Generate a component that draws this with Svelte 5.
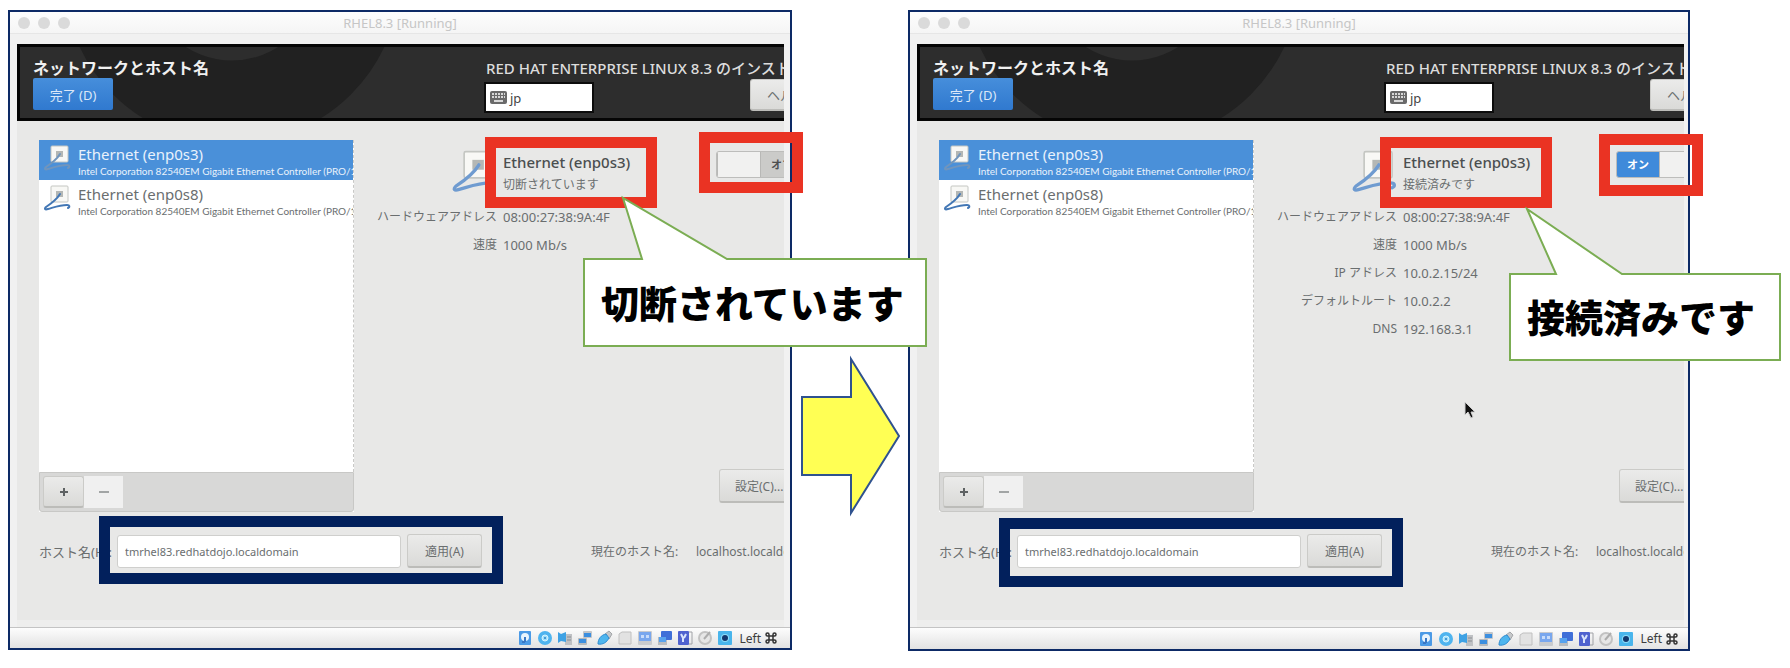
<script>
  const nic = 'Intel Corporation 82540EM Gigabit Ethernet Controller (PRO/1000 MT)';
  const devices = [
    { name: 'Ethernet (enp0s3)', info: nic },
    { name: 'Ethernet (enp0s8)', info: nic }
  ];
  const base = [
    ['ハードウェアアドレス', '08:00:27:38:9A:4F'],
    ['速度', '1000 Mb/s']
  ];
  const panes = [
    {
      id: 'before',
      on: false,
      status: '切断されています',
      rows: base,
      frames: [
        { kind: 'red', x: 477, y: 127, w: 172, h: 71 },
        { kind: 'red', x: 691, y: 122, w: 104, h: 61 },
        { kind: 'navy', x: 91, y: 506, w: 404, h: 68 }
      ],
      callout: { x: 575, y: 185, w: 344, h: 152, body: 61, points: '1,64 59,64 40,3 144,64 343,64 343,151 1,151' }
    },
    {
      id: 'after',
      on: true,
      status: '接続済みです',
      rows: [...base, ['IP アドレス', '10.0.2.15/24'], ['デフォルトルート', '10.0.2.2'], ['DNS', '192.168.3.1']],
      frames: [
        { kind: 'red', x: 472, y: 127, w: 172, h: 71 },
        { kind: 'red', x: 691, y: 124, w: 104, h: 62 },
        { kind: 'navy', x: 91, y: 508, w: 404, h: 69 }
      ],
      callout: { x: 601, y: 197, w: 272, h: 154, body: 64, points: '1,67 47,67 18,2 113,67 271,67 271,153 1,153' }
    }
  ];
</script>

{#snippet cable(cls)}
  <svg class={cls} viewBox="0 0 28 28" aria-hidden="true">
    <rect x="8" y="1" width="17" height="16" rx="1" fill="#f8f8f5" stroke="#c4c6c2" />
    <rect x="13" y="6" width="7" height="6" fill="#b4b7b4" />
    <path d="M17 9C14 14 9 18 3 22c-2 2-1 3 2 2 7-2 12-4 19-4 3 0 3 2 1 3" fill="none" stroke="currentColor" stroke-width="2" stroke-linecap="round" stroke-linejoin="round" />
  </svg>
{/snippet}

{#snippet pane(p)}
  <section class="pane {p.id}">
    <div class="window">
      <div class="titlebar">
        <div class="lights"><i></i><i></i><i></i></div>
        <span>RHEL8.3 [Running]</span>
      </div>
      <div class="screen">
        <header>
          <svg class="ring" viewBox="0 0 400 77" aria-hidden="true">
            <circle cx="215" cy="-69" r="127" fill="none" stroke="#212121" stroke-width="83" />
          </svg>
          <div class="head-left">
            <h1>ネットワークとホスト名</h1>
            <button class="done">完了 (D)</button>
          </div>
          <div class="head-right">
            <h2>RED HAT ENTERPRISE LINUX 8.3 のインストール</h2>
            <div class="head-tools">
              <button class="layout">
                <svg width="17" height="13" viewBox="0 0 17 13" aria-hidden="true">
                  <rect width="17" height="13" rx="2" fill="#6a6a6a" />
                  <path d="M2 3h13M2 6h13" stroke="#d8d8d8" stroke-width="2" stroke-dasharray="2 1" />
                  <path d="M4 10h9" stroke="#d8d8d8" stroke-width="2" />
                </svg>
                jp
              </button>
              <button class="btn help">ヘルプ (H)</button>
            </div>
          </div>
        </header>

        <div class="main">
          <div class="devices">
            <ul>
              {#each devices as d, i}
                <li>
                  <button class="device" class:selected={i === 0}>
                    {@render cable('small')}
                    <span class="device-text"><b>{d.name}</b><small>{d.info}</small></span>
                  </button>
                </li>
              {/each}
            </ul>
            <div class="tools">
              <button class="btn plus" aria-label="追加">
                <svg width="12" height="12" viewBox="0 0 12 12"><path d="M2 6h8M6 2v8" stroke="#5e6263" stroke-width="2" /></svg>
              </button>
              <button class="minus" disabled aria-label="削除">
                <svg width="12" height="12" viewBox="0 0 12 12"><path d="M1 6h10" stroke="#a2a5a5" stroke-width="2" /></svg>
              </button>
            </div>
          </div>

          <div class="detail">
            <div class="detail-head">
              {@render cable('big')}
              <div class="state">
                <h3>Ethernet (enp0s3)</h3>
                <p>{p.status}</p>
              </div>
              <button class="switch" class:on={p.on} role="switch" aria-checked={p.on} aria-label="Ethernet (enp0s3)">
                {#if p.on}<span class="word">オン</span><span class="knob"></span>
                {:else}<span class="knob"></span><span class="word">オフ</span>{/if}
              </button>
            </div>
            <dl>
              {#each p.rows as [label, value]}
                <dt>{label}</dt>
                <dd>{value}</dd>
              {/each}
            </dl>
            <button class="btn settings">設定(C)...</button>
          </div>
        </div>

        <div class="hostrow">
          <label for="host-{p.id}">ホスト名(H):</label>
          <input id="host-{p.id}" type="text" value="tmrhel83.redhatdojo.localdomain" />
          <button class="btn apply">適用(A)</button>
          <span class="current">現在のホスト名:</span>
          <span class="current-value">localhost.localdomain</span>
        </div>
      </div>

      <footer>
        <svg viewBox="0 0 16 16" aria-hidden="true"><rect x="2" y="1" width="12" height="14" rx="1" fill="#4b9ae6" /><circle cx="8" cy="7" r="4" fill="#e8f4fd" /><path d="M8 7v5M5 12h3" stroke="#3977c4" stroke-width="2" /></svg>
        <svg viewBox="0 0 16 16" aria-hidden="true"><circle cx="8" cy="8" r="7" fill="#4fb4ef" /><circle cx="8" cy="8" r="3" fill="#9fe0fb" stroke="#d8f3fd" /><circle cx="8" cy="8" r="1" fill="#2d7fc4" /></svg>
        <svg viewBox="0 0 16 16" aria-hidden="true"><rect x="8" y="4" width="7" height="11" fill="#bfc1c4" /><path d="M1 2l3 2 5-2v10l-5-1-3 2z" fill="#3fa2e4" /><path d="M10 7h4M10 10h4" stroke="#8c8f93" /></svg>
        <svg viewBox="0 0 16 16" aria-hidden="true"><rect x="6" y="1" width="9" height="7" rx="1" fill="#c3c5c8" /><rect x="1" y="8" width="9" height="7" rx="1" fill="#b7babd" /><rect x="7" y="3" width="7" height="4" fill="#3c8fe0" /><rect x="2" y="9" width="7" height="4" fill="#3c8fe0" /></svg>
        <svg viewBox="0 0 16 16" aria-hidden="true"><path d="M8 4l4-3 3 3-3 5z" fill="#c6c8ca" stroke="#a3a5a8" /><path d="M1 14c0-5 3-9 8-10l3 4c-2 4-6 7-11 6z" fill="#4db5ee" stroke="#2f8bd0" /></svg>
        <svg viewBox="0 0 16 16" aria-hidden="true"><path d="M2 4l3-2h9v12H2z" fill="#e2e2e2" stroke="#c0c0c0" /></svg>
        <svg viewBox="0 0 16 16" aria-hidden="true"><rect x="1" y="1" width="14" height="14" rx="1" fill="#c9cbce" /><rect x="2" y="2" width="12" height="9" fill="#79a7ee" /><path d="M4 5h3v3H4zM9 5h3v3H9z" fill="#c8dcfa" /></svg>
        <svg viewBox="0 0 16 16" aria-hidden="true"><rect x="1" y="7" width="9" height="8" fill="#b9bcc0" /><rect x="4" y="1" width="11" height="9" rx="1" fill="#3f6fd8" /><rect x="2" y="7" width="7" height="5" fill="#58a3ee" /></svg>
        <svg viewBox="0 0 16 16" aria-hidden="true"><path d="M12 2h3v12h-3" fill="none" stroke="#a0a2a6" /><rect x="1" y="1" width="11" height="14" rx="1" fill="#4f62cf" /><path d="M4 4l2 4v4M9 4L7 8" stroke="#d9e4fb" stroke-width="2" fill="none" /></svg>
        <svg viewBox="0 0 16 16" aria-hidden="true"><circle cx="8" cy="8" r="6" fill="#e6e6e6" stroke="#c2c2c2" stroke-width="2" /><path d="M7 9l6-7" stroke="#adadad" stroke-width="2" /></svg>
        <svg viewBox="0 0 16 16" aria-hidden="true"><rect x="1" y="1" width="14" height="14" rx="1" fill="#49b5ec" /><circle cx="8" cy="8" r="4" fill="#8cdcf9" /><circle cx="8" cy="8" r="3" fill="#12386e" /></svg>
        <span>Left</span>
        <svg class="command" viewBox="0 0 24 24" aria-hidden="true"><path d="M8 8H5a3 3 0 1 1 3-3v14a3 3 0 1 1-3-3h14a3 3 0 1 1-3 3V5a3 3 0 1 1 3 3z" fill="none" stroke="#333" stroke-width="3" /></svg>
      </footer>
    </div>

    {#each p.frames as f}
      <div class="frame {f.kind}" style="left:{f.x}px;top:{f.y}px;width:{f.w}px;height:{f.h}px"></div>
    {/each}
    <div class="callout" style="left:{p.callout.x}px;top:{p.callout.y}px;width:{p.callout.w}px;height:{p.callout.h}px;padding-top:{p.callout.body}px">
      <svg viewBox="0 0 {p.callout.w} {p.callout.h}" aria-hidden="true">
        <polygon points={p.callout.points} fill="#fff" stroke="#7bad53" stroke-width="2" />
      </svg>
      <strong>{p.status}</strong>
    </div>
    {#if p.on}
      <svg class="cursor" viewBox="0 0 12 18" aria-hidden="true"><path d="M1 1v13l3-3 3 6 2-1-2-5h4z" fill="#111" stroke="#cfcfcf" /></svg>
    {/if}
  </section>
{/snippet}

<main class="stage">
  {@render pane(panes[0])}
  <svg class="arrow" viewBox="0 0 102 162" aria-hidden="true">
    <path d="M2 42h49V4l48 77-48 77v-38H2z" fill="#ffff54" stroke="#2f528f" stroke-width="2" />
  </svg>
  {@render pane(panes[1])}
</main>

<style>
  :global(body) {
    background: #fff;
  }
  .stage {
    display: grid;
    grid-template-columns: minmax(0, 784fr) 116px minmax(0, 782fr);
    align-items: start;
    padding: 10px 100px 16px 8px;
    overflow: hidden;
    font-family: 'Noto Sans', 'Noto Sans CJK JP', sans-serif;
    font-size: 12px;
    color: #6a6e6f;
  }
  .stage * {
    box-sizing: border-box;
  }
  button,
  input {
    margin: 0;
    padding: 0;
    border: 0;
    font: inherit;
    color: inherit;
  }
  h1,
  h2,
  h3,
  p,
  ul,
  dl,
  dd {
    margin: 0;
    padding: 0;
  }
  .pane {
    position: relative;
  }
  .before {
    z-index: 1;
  }
  .window {
    border: 2px solid #0d2a66;
    background: #f1f1f1;
    overflow: hidden;
  }
  .titlebar {
    position: relative;
    display: flex;
    align-items: center;
    justify-content: center;
    height: 22px;
    margin-bottom: 10px;
    background: linear-gradient(#fdfdfd, #f5f5f5);
    border-bottom: 1px solid #e6e6e6;
    font-size: 13px;
    color: #c6c6c6;
  }
  .lights {
    position: absolute;
    left: 8px;
    display: flex;
    gap: 8px;
  }
  .lights i {
    width: 12px;
    height: 12px;
    border-radius: 50%;
    background: #dadada;
  }
  .screen {
    margin: 0 6px 0 7px;
    padding-bottom: 52px;
    overflow: hidden;
    background: #e8e8e7;
    border-bottom: 7px solid #eeeeed;
  }
  .after .screen {
    margin-right: 4px;
  }
  header {
    position: relative;
    display: flex;
    height: 77px;
    padding: 11px 0 0 13px;
    border: 3px solid #050505;
    border-right: 0;
    background: #2d2d2d;
    overflow: hidden;
    white-space: nowrap;
  }
  .ring {
    position: absolute;
    left: -3px;
    top: -3px;
    width: 400px;
    height: 77px;
  }
  .head-left,
  .head-right {
    position: relative;
  }
  .head-left {
    flex: 0 0 453px;
  }
  h1,
  h2 {
    font-size: 16px;
    line-height: 20px;
    color: #f0f0f0;
  }
  h2 {
    font-size: 15px;
    font-weight: 500;
    color: #dcdcdc;
  }
  .done {
    display: block;
    width: 80px;
    height: 32px;
    border-radius: 2px;
    background: linear-gradient(#468edb, #3079cf);
    font-size: 13px;
    color: #dbe8f8;
  }
  .head-tools {
    display: flex;
    align-items: center;
    gap: 158px;
  }
  .layout {
    flex: 0 0 106px;
    display: flex;
    align-items: center;
    gap: 3px;
    height: 27px;
    margin-top: 6px;
    padding-left: 4px;
    background: #fff;
    outline: 2px solid #0c0c0c;
    font-size: 13px;
    color: #444;
  }
  .btn {
    border: 1px solid #cbcbc8;
    border-bottom: 2px solid #bcbcb9;
    border-radius: 3px;
    background: linear-gradient(#ebebea, #dadad8);
    white-space: nowrap;
  }
  .help {
    flex: 0 0 100px;
    height: 32px;
    padding-left: 16px;
    font-size: 13px;
    text-align: left;
  }
  .main {
    display: flex;
    padding: 19px 0 0 22px;
  }
  .devices {
    flex: 0 0 315px;
    min-width: 0;
    display: flex;
    flex-direction: column;
    min-height: 372px;
    background: #fff;
  }
  ul {
    flex: 1;
    list-style: none;
    border-right: 1px dashed #c9c9c7;
  }
  .device {
    display: flex;
    gap: 7px;
    width: 100%;
    height: 40px;
    padding: 4px 0 0 4px;
    overflow: hidden;
    background: none;
    text-align: left;
    white-space: nowrap;
  }
  .device.selected {
    background: #4a90d9;
    color: #e9f2fc;
  }
  .small {
    flex: 0 0 28px;
    height: 30px;
    color: #4377b5;
  }
  .selected .small {
    color: #7095bd;
  }
  .device-text {
    display: flex;
    flex-direction: column;
  }
  b {
    font-size: 15px;
    font-weight: 400;
    line-height: 20px;
  }
  small {
    font-family: 'Lato', sans-serif;
    font-size: 10px;
    line-height: 14px;
  }
  .tools {
    display: flex;
    height: 40px;
    padding: 3px;
    background: #d8d8d7;
    border: 1px solid #c8c8c6;
    border-radius: 0 0 3px 3px;
  }
  .plus {
    width: 41px;
  }
  .minus {
    width: 39px;
    background: #f0f0f0;
  }
  .tools svg {
    display: block;
    margin: auto;
  }
  .detail {
    flex: 1;
    min-width: 0;
    display: flex;
    flex-direction: column;
  }
  .detail-head {
    display: grid;
    grid-template-columns: 143px 207px 110px;
    gap: 6px;
    height: 63px;
    padding-top: 10px;
  }
  .big {
    justify-self: end;
    width: 46px;
    height: 46px;
    color: #6f9bd0;
  }
  h3 {
    font-size: 15px;
    font-weight: 500;
    line-height: 24px;
    color: #4b4f50;
  }
  .state p {
    font-size: 12px;
    line-height: 22px;
  }
  .switch {
    display: flex;
    width: 88px;
    height: 27px;
    margin-top: 1px;
    border: 1px solid #bdbdbb;
    border-radius: 3px;
    background: #cbcbc9;
    overflow: hidden;
    line-height: 25px;
    color: #4d4f50;
  }
  .switch.on {
    background: #3f8ada;
    color: #fff;
  }
  .switch span {
    flex: 1;
  }
  .knob {
    background: #f1f1f0;
    border: solid #b8b8b6;
    border-width: 0 1px;
  }
  .word {
    font-weight: 700;
    font-size: 11px;
  }
  dl {
    display: grid;
    grid-template-columns: 143px 1fr;
    column-gap: 6px;
    line-height: 28px;
  }
  dt {
    text-align: right;
  }
  dd {
    font-size: 13px;
  }
  .settings {
    width: 100px;
    height: 34px;
    margin: auto 0 9px 365px;
    padding-left: 15px;
    text-align: left;
  }
  .hostrow {
    display: flex;
    align-items: center;
    margin-top: 22px;
    padding-left: 22px;
    white-space: nowrap;
  }
  label {
    flex: 0 0 78px;
    font-size: 13px;
  }
  input {
    flex: 0 0 284px;
    height: 33px;
    padding-left: 7px;
    border: 1px solid #cfcfcd;
    border-radius: 3px;
    background: #fff;
    font-size: 11px;
  }
  .apply {
    flex: 0 0 75px;
    height: 34px;
    margin: 0 109px 0 6px;
  }
  .current {
    flex: 0 0 105px;
  }
  footer {
    display: flex;
    align-items: center;
    justify-content: flex-end;
    gap: 4px;
    height: 21px;
    padding-right: 13px;
    border-top: 1px solid #c4c4c4;
    background: linear-gradient(#fdfdfd, #e2e2e2);
    color: #3c3c3c;
  }
  .after footer {
    height: 22px;
    padding-right: 10px;
  }
  footer svg {
    width: 16px;
    height: 16px;
  }
  footer span {
    margin-left: 2px;
  }
  footer .command {
    width: 12px;
    height: 12px;
  }
  .frame {
    position: absolute;
    border: 11px solid #ea3323;
  }
  .navy {
    border-color: #02205c;
  }
  .callout {
    position: absolute;
    display: flex;
    align-items: center;
    padding-left: 18px;
    color: #000;
  }
  .callout svg {
    position: absolute;
    inset: 0;
  }
  strong {
    position: relative;
    font-family: 'Noto Sans CJK JP', sans-serif;
    font-size: 38px;
    font-weight: 900;
    line-height: 56px;
    white-space: nowrap;
  }
  .cursor {
    position: absolute;
    left: 556px;
    top: 391px;
    width: 12px;
    height: 18px;
  }
  .arrow {
    width: 102px;
    height: 162px;
    margin: 345px 0 0 8px;
  }
</style>
